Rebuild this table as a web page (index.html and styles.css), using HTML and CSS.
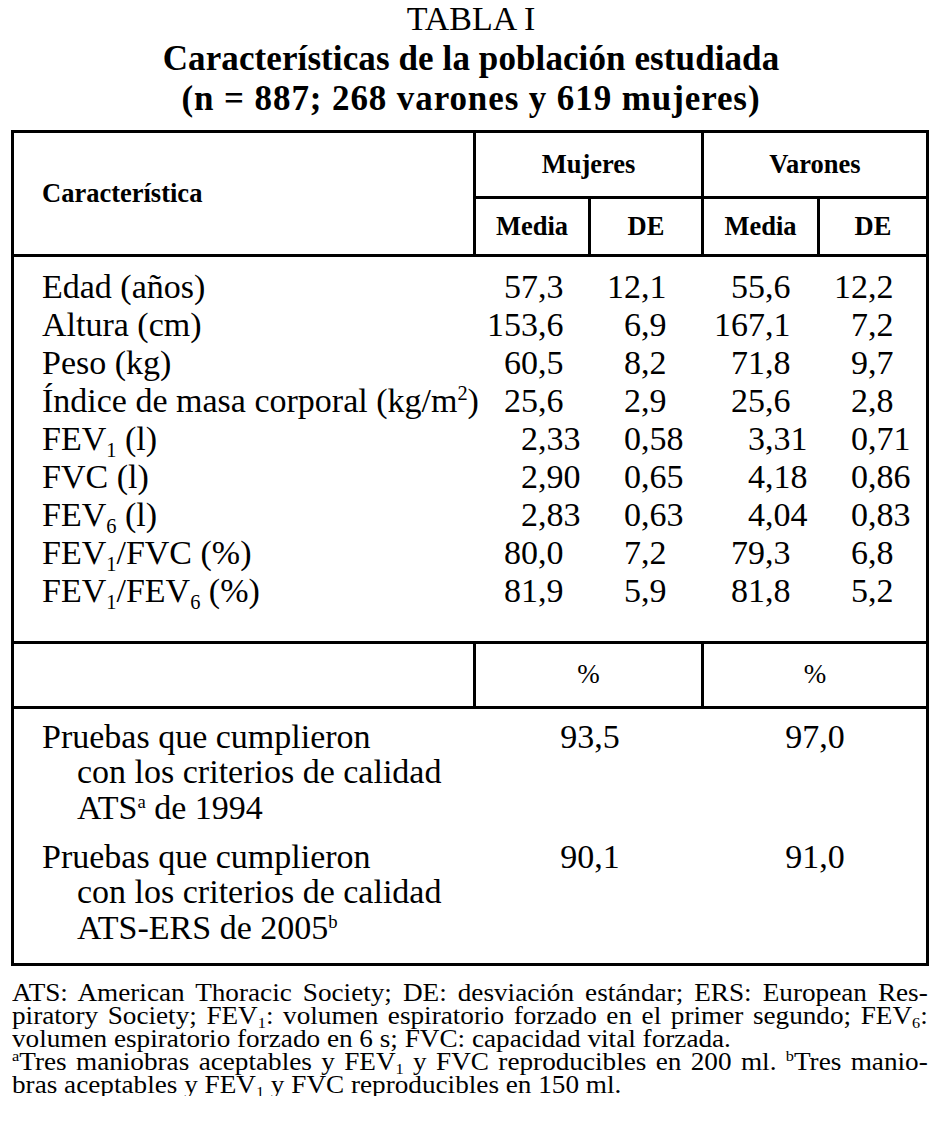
FILE: index.html
```html
<!DOCTYPE html>
<html lang="es">
<head>
<meta charset="utf-8">
<title>Tabla I</title>
<link rel="stylesheet" href="styles.css">
</head>
<body>
<div class="page">
  <h1 class="title">
    <span class="t-label">TABLA I</span>
    <span class="t-main">Características de la población estudiada</span>
    <span class="t-main t-n">(n = 887; 268 varones y 619 mujeres)</span>
  </h1>

  <div class="table">
    <div class="cell hd char">Característica</div>
    <div class="cell hd grp g-muj">Mujeres</div>
    <div class="cell hd grp g-var">Varones</div>
    <div class="cell hd sub">Media</div>
    <div class="cell hd sub">DE</div>
    <div class="cell hd sub">Media</div>
    <div class="cell hd sub">DE</div>

    <div class="cell body">
      <div class="row"><span class="lbl">Edad (años)</span><span class="num c2"><span class="i">57</span>,3</span><span class="num c3"><span class="i">12</span>,1</span><span class="num c4"><span class="i">55</span>,6</span><span class="num c5"><span class="i">12</span>,2</span></div>
      <div class="row"><span class="lbl">Altura (cm)</span><span class="num c2"><span class="i">153</span>,6</span><span class="num c3"><span class="i">6</span>,9</span><span class="num c4"><span class="i">167</span>,1</span><span class="num c5"><span class="i">7</span>,2</span></div>
      <div class="row"><span class="lbl">Peso (kg)</span><span class="num c2"><span class="i">60</span>,5</span><span class="num c3"><span class="i">8</span>,2</span><span class="num c4"><span class="i">71</span>,8</span><span class="num c5"><span class="i">9</span>,7</span></div>
      <div class="row"><span class="lbl">Índice de masa corporal (kg/m<sup>2</sup>)</span><span class="num c2"><span class="i">25</span>,6</span><span class="num c3"><span class="i">2</span>,9</span><span class="num c4"><span class="i">25</span>,6</span><span class="num c5"><span class="i">2</span>,8</span></div>
      <div class="row"><span class="lbl">FEV<sub>1</sub> (l)</span><span class="num c2"><span class="i">2</span>,33</span><span class="num c3"><span class="i">0</span>,58</span><span class="num c4"><span class="i">3</span>,31</span><span class="num c5"><span class="i">0</span>,71</span></div>
      <div class="row"><span class="lbl">FVC (l)</span><span class="num c2"><span class="i">2</span>,90</span><span class="num c3"><span class="i">0</span>,65</span><span class="num c4"><span class="i">4</span>,18</span><span class="num c5"><span class="i">0</span>,86</span></div>
      <div class="row"><span class="lbl">FEV<sub>6</sub> (l)</span><span class="num c2"><span class="i">2</span>,83</span><span class="num c3"><span class="i">0</span>,63</span><span class="num c4"><span class="i">4</span>,04</span><span class="num c5"><span class="i">0</span>,83</span></div>
      <div class="row"><span class="lbl">FEV<sub>1</sub>/FVC (%)</span><span class="num c2"><span class="i">80</span>,0</span><span class="num c3"><span class="i">7</span>,2</span><span class="num c4"><span class="i">79</span>,3</span><span class="num c5"><span class="i">6</span>,8</span></div>
      <div class="row"><span class="lbl">FEV<sub>1</sub>/FEV<sub>6</sub> (%)</span><span class="num c2"><span class="i">81</span>,9</span><span class="num c3"><span class="i">5</span>,9</span><span class="num c4"><span class="i">81</span>,8</span><span class="num c5"><span class="i">5</span>,2</span></div>
    </div>

    <div class="cell pct-blank"></div>
    <div class="cell pct g-muj">%</div>
    <div class="cell pct g-var">%</div>

    <div class="cell body2">
      <div class="qrow">
        <div class="qlbl"><span class="ln">Pruebas que cumplieron</span><span class="ln cont">con los criterios de calidad</span><span class="ln cont">ATS<sup class="sm">a</sup> de 1994</span></div>
        <div class="qval">93,5</div>
        <div class="qval">97,0</div>
      </div>
      <div class="qrow">
        <div class="qlbl"><span class="ln">Pruebas que cumplieron</span><span class="ln cont">con los criterios de calidad</span><span class="ln cont">ATS-ERS de 2005<sup class="sm">b</sup></span></div>
        <div class="qval">90,1</div>
        <div class="qval">91,0</div>
      </div>
    </div>
  </div>

  <div class="notes">
    <span class="nl just">ATS: American Thoracic Society; DE: desviación estándar; ERS: European Res-</span>
    <span class="nl just">piratory Society; FEV<sub>1</sub>: volumen espiratorio forzado en el primer segundo; FEV<sub>6</sub>:</span>
    <span class="nl">volumen espiratorio forzado en 6 s; FVC: capacidad vital forzada.</span>
    <span class="nl just"><sup>a</sup>Tres maniobras aceptables y FEV<sub>1</sub> y FVC reproducibles en 200 ml. <sup>b</sup>Tres manio-</span>
    <span class="nl">bras aceptables y FEV<sub>1</sub> y FVC reproducibles en 150 ml.</span>
  </div>
</div>
</body>
</html>
```

FILE: styles.css
```css
html, body {
  margin: 0;
  padding: 0;
  background: #ffffff;
  color: #000000;
}

body {
  font-family: "Liberation Serif", "Times New Roman", serif;
}

.page {
  width: 942px;
}

/* Title */
.title {
  margin: -1px 0 0 0;
  text-align: center;
  font-size: 34px;
  line-height: 40px;
  font-weight: normal;
}

.t-label,
.t-main {
  display: block;
}

.t-main {
  font-weight: bold;
  font-size: 35px;
  letter-spacing: 0.1px;
}

.t-n {
  letter-spacing: 0.9px;
}

/* Table frame: black background showing through 3px gaps */
.table {
  margin: 10.5px 0 0 11px;
  width: 918px;
  box-sizing: border-box;
  display: grid;
  grid-template-columns: 459px 112px 110px 113px 106px;
  grid-template-rows: 63px 55px 384px 62px 254px;
  gap: 3px;
  padding: 3px;
  background: #000000;
}

.cell {
  background: #ffffff;
}

.hd {
  font-weight: bold;
  font-size: 26.5px;
  display: flex;
  align-items: center;
  justify-content: center;
}

.char {
  grid-column: 1;
  grid-row: 1 / span 2;
  justify-content: flex-start;
  padding-left: 28px;
}

.g-muj {
  grid-column: 2 / span 2;
}

.g-var {
  grid-column: 4 / span 2;
}

/* Main data body */
.body {
  grid-column: 1 / -1;
  padding-top: 11px;
  font-size: 34px;
  line-height: 38px;
}

.row {
  display: grid;
  grid-template-columns: 462px 115px 113px 116px 106px;
  height: 38px;
}

.lbl {
  padding-left: 28px;
  white-space: nowrap;
}

.num {
  display: flex;
  white-space: nowrap;
}

.num .i {
  text-align: right;
  flex: none;
}

.c2 .i { width: 62px; }
.c3 .i { width: 50px; }
.c4 .i { width: 61px; }
.c5 .i { width: 48px; }

sub,
sup {
  font-size: 0.6em;
  line-height: 0;
}

sub {
  vertical-align: -0.32em;
}

sup {
  vertical-align: 0.6em;
}

sup.sm {
  font-size: 0.55em;
}

/* Percentage header row */
.pct-blank {
  grid-column: 1;
}

.pct {
  font-size: 27px;
  display: flex;
  align-items: center;
  justify-content: center;
}

/* Lower body */
.body2 {
  grid-column: 1 / -1;
  padding-top: 10px;
  font-size: 34px;
  line-height: 35.5px;
}

.qrow {
  display: grid;
  grid-template-columns: 462px 228px 222px;
  margin-bottom: 13.5px;
}

.qlbl {
  padding-left: 28px;
}

.ln {
  display: block;
  white-space: nowrap;
}

.cont {
  padding-left: 35px;
}

.qval {
  text-align: center;
}

/* Footnotes: the printed face is an expanded Times, emulated with scaleX */
.notes {
  margin: 15px 0 0 12px;
  width: 825px;
  font-size: 24.5px;
  line-height: 23px;
  transform: scaleX(1.11);
  transform-origin: 0 0;
}

.nl {
  display: block;
  white-space: nowrap;
  text-align: left;
}

.nl.just {
  text-align: justify;
  text-align-last: justify;
}

.notes sub {
  vertical-align: -0.3em;
}
```
